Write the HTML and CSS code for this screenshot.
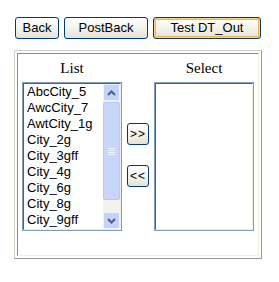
FILE: index.html
```html
<!DOCTYPE html>
<html lang="en">
<head>
    <meta charset="UTF-8">
    <title>Test DT_Out</title>
    <link rel="stylesheet" href="styles.css">
</head>
<body>
    <div class="bar">
        <button class="btn btn-back">Back</button>
        <button class="btn btn-post">PostBack</button>
        <button class="btn btn-test focus">Test DT_Out</button>
    </div>
    <div class="frame">
        <div class="cell">
            <div class="col">
                <div class="label">List</div>
                <div class="listbox">
                    <div class="listbox-inner">
                        <ul class="items">
                            <li>AbcCity_5</li>
                            <li>AwcCity_7</li>
                            <li>AwtCity_1g</li>
                            <li>City_2g</li>
                            <li>City_3gff</li>
                            <li>City_4g</li>
                            <li>City_6g</li>
                            <li>City_8g</li>
                            <li>City_9gff</li>
                        </ul>
                        <div class="scroll">
                            <div class="sb-btn">
                                <svg width="9" height="6" viewBox="0 0 9 6"><path d="M1 5 L4.5 1.5 L8 5" fill="none" stroke="#4d6185" stroke-width="2"/></svg>
                            </div>
                            <div class="sb-thumb">
                                <span class="grip"></span>
                                <span class="grip"></span>
                                <span class="grip"></span>
                                <span class="grip"></span>
                            </div>
                            <div class="sb-track"></div>
                            <div class="sb-btn">
                                <svg width="9" height="6" viewBox="0 0 9 6"><path d="M1 1 L4.5 4.5 L8 1" fill="none" stroke="#4d6185" stroke-width="2"/></svg>
                            </div>
                        </div>
                    </div>
                </div>
            </div>
            <div class="col-mid">
                <button class="btn btn-small btn-add">&gt;&gt;</button>
                <button class="btn btn-small btn-del">&lt;&lt;</button>
            </div>
            <div class="col">
                <div class="label">Select</div>
                <div class="listbox">
                    <div class="listbox-inner"></div>
                </div>
            </div>
        </div>
    </div>
</body>
</html>
```

FILE: styles.css
```css
*{
    margin: 0;
    padding: 0;
    box-sizing: border-box;
}
body{
    background: #fff;
    font-family: "Liberation Sans", Arial, sans-serif;
    font-size: 13px;
    color: #000;
}
.bar{
    display: flex;
    gap: 5px;
    padding: 17px 0 0 15px;
}
.btn{
    height: 22px;
    border: 1px solid #003c74;
    border-radius: 3px;
    background: linear-gradient(#ffffff, #f0f0ea 60%, #e3e2d8);
    font-family: "Liberation Sans", Arial, sans-serif;
    font-size: 13px;
    color: #000;
    line-height: 18px;
    text-align: center;
}
.btn-back{
    width: 44px;
}
.btn-post{
    width: 84px;
}
.btn-test{
    width: 108px;
}
.focus{
    box-shadow: inset 0 0 0 1px #fbd580, inset 0 0 0 2px #f5b43c;
}
.frame{
    width: 248px;
    margin: 11px 0 0 14px;
    padding: 2px;
    border: 1px solid;
    border-color: #d4d0c8 #9a9a9a #9a9a9a #d4d0c8;
}
.cell{
    display: flex;
    gap: 5px;
    padding: 4px 4px 24px 4px;
    border: 1px solid;
    border-color: #8a8a8a #f1efe2 #f1efe2 #8a8a8a;
}
.col{
    width: 100px;
}
.label{
    height: 20px;
    margin-bottom: 4px;
    font-family: "Liberation Serif", "Times New Roman", serif;
    font-size: 15px;
    line-height: 20px;
    text-align: center;
}
.listbox{
    width: 100px;
    height: 149px;
    border: 1px solid #7f9db9;
    background: #fff;
}
.listbox-inner{
    display: flex;
    height: 100%;
    border: 1px solid;
    border-color: #5f5d55 #f1efe2 #f1efe2 #5f5d55;
}
.items{
    flex: 1;
    list-style: none;
    padding-left: 3px;
    line-height: 16px;
    overflow: hidden;
    white-space: nowrap;
}
.scroll{
    display: flex;
    flex-direction: column;
    width: 17px;
    background: #f3f2ec;
}
.sb-btn{
    display: flex;
    align-items: center;
    justify-content: center;
    height: 17px;
    border: 1px solid #eef2fd;
    border-radius: 2px;
    background: #c3d4fb;
}
.sb-thumb{
    display: flex;
    flex-direction: column;
    align-items: center;
    justify-content: center;
    gap: 1px;
    height: 98px;
    margin-top: 1px;
    border: 1px solid #b7c9f3;
    border-radius: 2px;
    background: #c8d6fa;
}
.grip{
    display: block;
    width: 7px;
    height: 1px;
    background: #eef3fe;
}
.sb-track{
    flex: 1;
}
.col-mid{
    display: flex;
    flex-direction: column;
    width: 22px;
}
.btn-small{
    width: 22px;
    font-size: 12px;
    letter-spacing: 1px;
}
.btn-add{
    margin-top: 65px;
}
.btn-del{
    margin-top: 20px;
}
```
